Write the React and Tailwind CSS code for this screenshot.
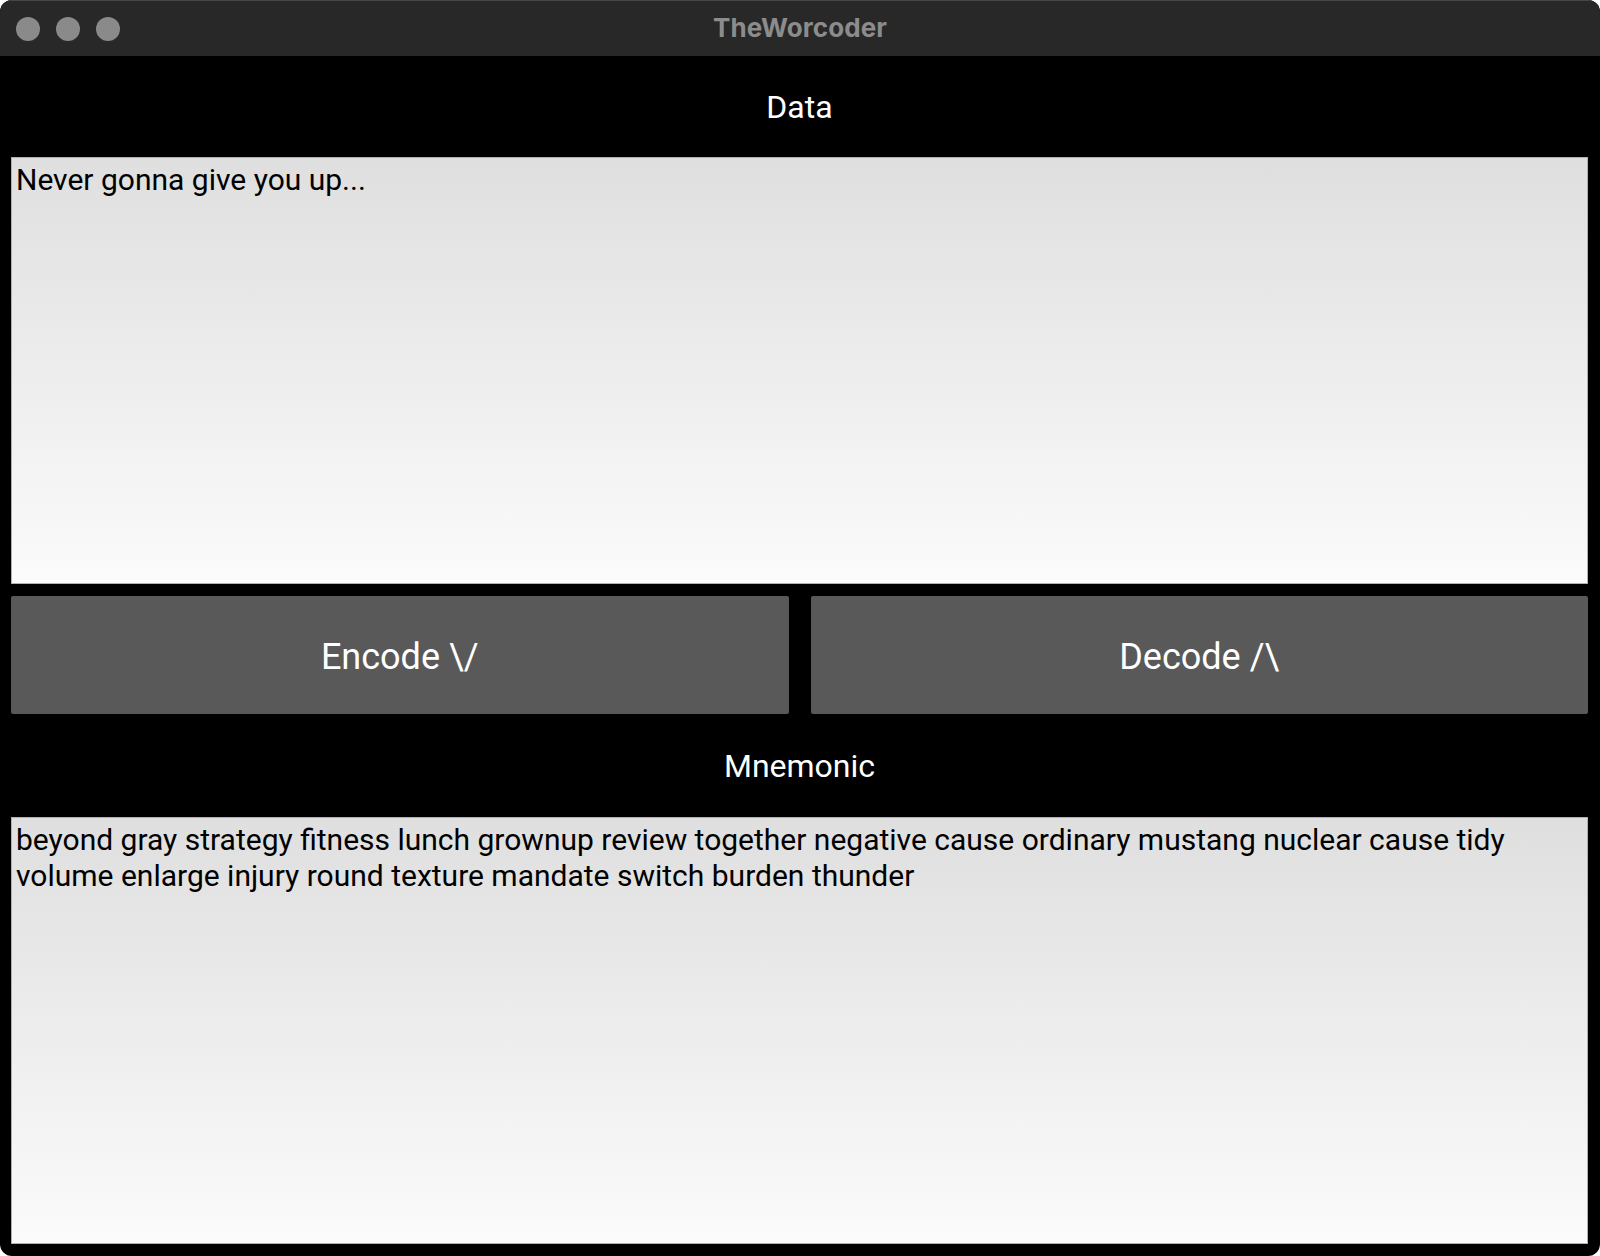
export default function App() {
  const roboto = { fontFamily: 'Roboto, "Noto Sans", sans-serif' };
  return (
    <div className="w-[1600px] h-[1256px] bg-white">
      <div className="w-full h-full rounded-[12px] overflow-hidden bg-black flex flex-col" style={roboto}>
        <div className="relative h-[56px] shrink-0 bg-[#282828] border-t border-[#474747] flex items-center">
          <div className="flex items-center gap-[16px] pl-[16px]">
            <div className="w-[24px] h-[24px] rounded-full bg-[#8a8a8a]" />
            <div className="w-[24px] h-[24px] rounded-full bg-[#8a8a8a]" />
            <div className="w-[24px] h-[24px] rounded-full bg-[#8a8a8a]" />
          </div>
          <div className="absolute inset-0 flex items-center justify-center pb-[2px]">
            <div className="text-[26px] font-bold text-[#8c8c8c] font-['Inter',sans-serif] tracking-[0.1px]">TheWorcoder</div>
          </div>
        </div>
        <div className="flex-1 flex flex-col pl-[11px] pr-[12px]">
          <div className="h-[101px] flex items-center justify-center text-white text-[32px]">Data</div>
          <div className="h-[427px] border border-[#b0b0b0] bg-gradient-to-b from-[#dfdfdf] to-[#fbfbfb] pl-[4px] pr-[6px] pt-[4px] text-black text-[30px] leading-[36px]">
            Never gonna give you up...
          </div>
          <div className="mt-[12px] h-[118px] flex gap-[22px]">
            <div className="flex-1 bg-[#595959] rounded-[2px] flex items-center justify-center pt-[3px] text-white text-[36px]">Encode \/</div>
            <div className="flex-1 bg-[#595959] rounded-[2px] flex items-center justify-center pt-[3px] text-white text-[36px]">Decode /\</div>
          </div>
          <div className="h-[103px] flex items-center justify-center text-white text-[32px]">Mnemonic</div>
          <div className="h-[427px] border border-[#b0b0b0] bg-gradient-to-b from-[#dfdfdf] to-[#fbfbfb] pl-[4px] pr-[6px] pt-[4px] text-black text-[30px] leading-[36px]">
            beyond gray strategy fitness lunch grownup review together negative cause ordinary mustang nuclear cause tidy volume enlarge injury round texture mandate switch burden thunder
          </div>
        </div>
      </div>
    </div>
  );
}
